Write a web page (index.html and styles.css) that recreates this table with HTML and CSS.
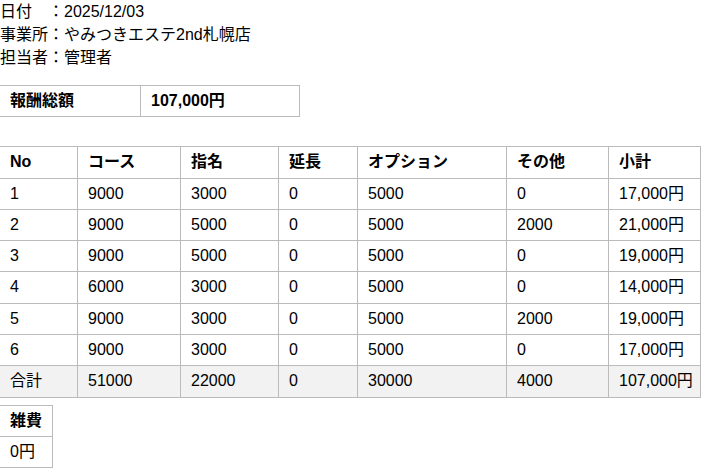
FILE: index.html
```html
<!DOCTYPE html>
<html lang="ja">
<head>
<meta charset="utf-8">
<title>報酬明細</title>
<link rel="stylesheet" href="styles.css">
</head>
<body>
<div class="info">
  <div>日付　：2025/12/03</div>
  <div>事業所：やみつきエステ2nd札幌店</div>
  <div>担当者：管理者</div>
</div>

<table class="grid total">
  <colgroup><col class="tw1"><col class="tw2"></colgroup>
  <tr><th>報酬総額</th><th>107,000円</th></tr>
</table>

<table class="grid main">
  <colgroup>
    <col class="c1"><col class="c2"><col class="c3"><col class="c4"><col class="c5"><col class="c6"><col class="c7">
  </colgroup>
  <thead>
    <tr><th>No</th><th>コース</th><th>指名</th><th>延長</th><th>オプション</th><th>その他</th><th>小計</th></tr>
  </thead>
  <tbody>
    <tr><td>1</td><td>9000</td><td>3000</td><td>0</td><td>5000</td><td>0</td><td>17,000円</td></tr>
    <tr><td>2</td><td>9000</td><td>5000</td><td>0</td><td>5000</td><td>2000</td><td>21,000円</td></tr>
    <tr><td>3</td><td>9000</td><td>5000</td><td>0</td><td>5000</td><td>0</td><td>19,000円</td></tr>
    <tr><td>4</td><td>6000</td><td>3000</td><td>0</td><td>5000</td><td>0</td><td>14,000円</td></tr>
    <tr><td>5</td><td>9000</td><td>3000</td><td>0</td><td>5000</td><td>2000</td><td>19,000円</td></tr>
    <tr><td>6</td><td>9000</td><td>3000</td><td>0</td><td>5000</td><td>0</td><td>17,000円</td></tr>
    <tr class="sum"><td>合計</td><td>51000</td><td>22000</td><td>0</td><td>30000</td><td>4000</td><td>107,000円</td></tr>
  </tbody>
</table>

<table class="grid misc">
  <tr><th>雑費</th></tr>
  <tr><td>0円</td></tr>
</table>
</body>
</html>
```
FILE: styles.css
```css
html, body {
  margin: 0;
  padding: 0;
  background: #fff;
}
body {
  font-family: "Liberation Sans", "Noto Sans CJK JP", sans-serif;
  font-size: 16px;
  color: #000;
}
.info {
  line-height: 23px;
}
.grid {
  border-collapse: collapse;
  margin-left: -1px;
}
.grid th,
.grid td {
  border: 1px solid #bbb;
  padding: 6px 10px;
  line-height: 18.3px;
  text-align: left;
  white-space: nowrap;
}
.grid th {
  font-weight: bold;
}
.total {
  margin-top: 16px;
  table-layout: fixed;
  width: 300px;
}
.tw1 { width: 141px; }
.tw2 { width: 159px; }
.main {
  margin-top: 29px;
  table-layout: fixed;
  width: 701px;
}
.c1 { width: 78px; }
.c2 { width: 103px; }
.c3 { width: 98px; }
.c4 { width: 79px; }
.c5 { width: 149px; }
.c6 { width: 102px; }
.c7 { width: 92px; }
.main .sum td {
  background: #f2f2f2;
}
.misc {
  margin-top: 7px;
}
```
